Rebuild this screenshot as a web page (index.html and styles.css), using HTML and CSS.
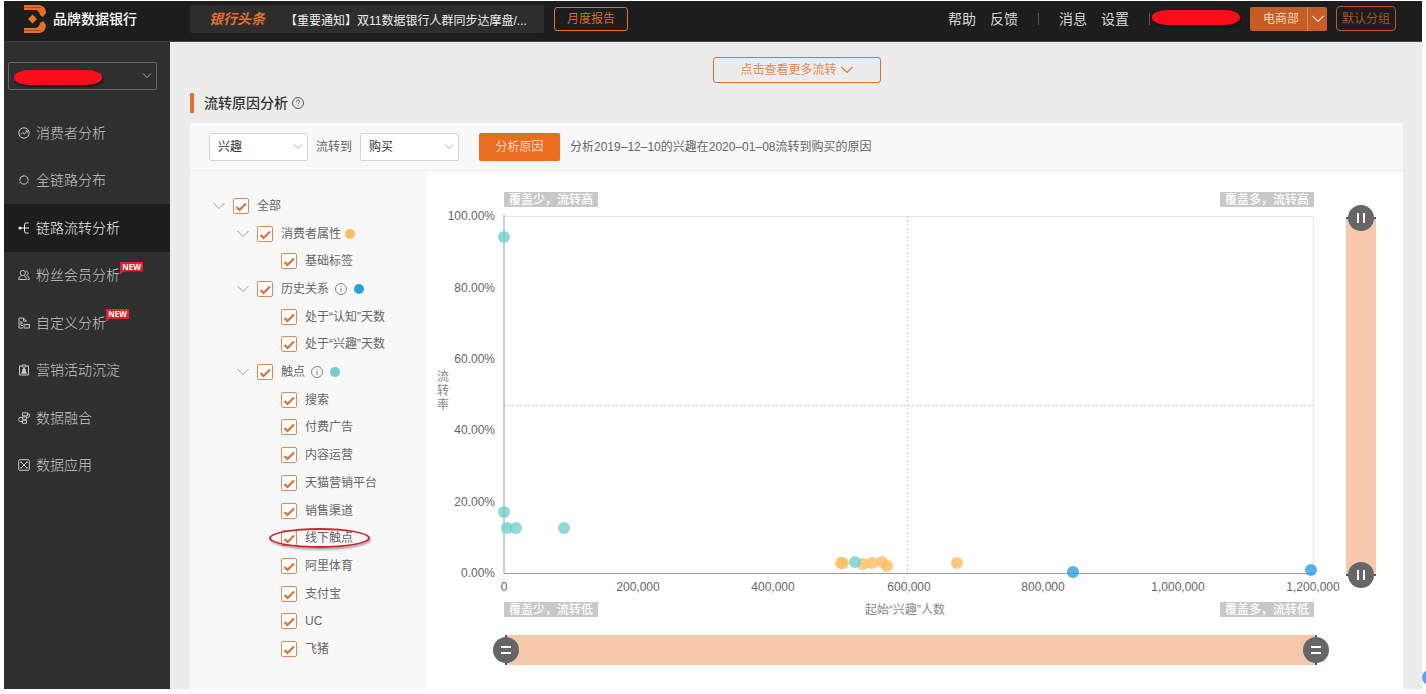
FILE: index.html
```html
<!DOCTYPE html>
<html lang="zh-CN">
<head>
  <meta charset="UTF-8">
  <title>品牌数据银行</title>
  <link rel="stylesheet" href="styles.css">
</head>
<body>
  <header class="topbar">
    <div class="brand">
      <svg class="brand-logo" width="22" height="28" viewBox="0 0 22 28">
        <path d="M0 0h15q7 1 7 8l-3 4-3-2q-1-5-5-5H0zM0 28h15q7-1 7-8l-3-4-3 2q-1 5-5 5H0z" fill="#e36f2a"/>
        <path d="M0 2.500h17M0 25.500h17" stroke="#a3562a"/>
        <path d="M8.500 9.500l4.500 4.500-4.500 4.500L4 14z" fill="#f0752b"/>
      </svg>
      <span>品牌数据银行</span>
    </div>
    <div class="ticker">
      <strong>银行头条</strong>
      <a href="#">【重要通知】双11数据银行人群同步达摩盘/...</a>
    </div>
    <button class="outline-button report-button">月度报告</button>
    <nav class="top-links">
      <a href="#">帮助</a>
      <a href="#">反馈</a>
      <i class="divider"></i>
      <a href="#">消息</a>
      <a href="#">设置</a>
      <i class="divider"></i>
    </nav>
    <span class="mask user-mask"></span>
    <div class="dept">
      <button class="dept-name">电商部</button>
      <button class="dept-arrow" aria-label="切换部门">
        <svg width="12" height="8" viewBox="0 0 12 8"><path d="M.5 1l5.500 5.500L11.500 1" fill="none" stroke="#f6d5c2" stroke-width="1.200"/></svg>
      </button>
    </div>
    <button class="outline-button group-button">默认分组</button>
  </header>

  <div class="shell">
    <aside class="sidebar">
      <div class="account">
        <select aria-label="品牌"><option></option></select>
        <span class="mask account-mask"></span>
      </div>
      <ul class="menu">
        <li><a href="#">
          <svg class="menu-icon" viewBox="0 0 12 12"><circle cx="6" cy="6" r="5.200"/><path d="M2.800 7.500l2-2 1.700 1.500 2.700-3M7.500 3.800l1.800-.1v1.800"/></svg>
          消费者分析</a></li>
        <li><a href="#">
          <svg class="menu-icon" viewBox="0 0 12 12"><circle cx="6" cy="6" r="4.200" stroke-dasharray="7 1.800" stroke-dashoffset="-3"/><path d="M6 .8v2M1.500 8.800l1.500-.9M10.500 8.800L9 7.900"/></svg>
          全链路分布</a></li>
        <li class="active"><a href="#">
          <svg class="menu-icon" viewBox="0 0 12 12"><circle cx="2" cy="6" r="1.600" fill="currentColor" stroke="none"/><path d="M2 6h9M10.500 1H8.200Q6.500 1 6.500 2.800v6.400Q6.500 11 8.200 11h2.300"/></svg>
          链路流转分析</a></li>
        <li><a href="#">
          <svg class="menu-icon" viewBox="0 0 12 12"><circle cx="4.800" cy="4" r="2.600"/><path d="M.8 10.500c0-2.500 1.500-3.500 2.700-3.900M.8 10.500h7.500c0-2.300-1-3.300-2.300-3.900M7.800 2c2.800.2 2.800 3.600.8 4.500 1.500.7 2.600 1.800 2.600 4H9.500"/></svg>
          粉丝会员分析<em class="new-tag">NEW</em></a></li>
        <li><a href="#">
          <svg class="menu-icon" viewBox="0 0 12 12"><path d="M5 11H1V1h4.500l2.500 2.500V5M5.500 1v3H8M3 4v4.500h2M3 6h2M6 11V7l2 1.300 1-1.500 1 1.500 1.400-1.300v4z"/></svg>
          自定义分析<em class="new-tag">NEW</em></a></li>
        <li><a href="#">
          <svg class="menu-icon" viewBox="0 0 12 12"><path d="M4 2H1.500v9h9V2H8M4 1h4v2H4z"/><path d="M6 4l1.500 2L7 7l1.500 2.200h-5L5 7l-.5-1z" fill="currentColor"/></svg>
          营销活动沉淀</a></li>
        <li><a href="#">
          <svg class="menu-icon" viewBox="0 0 12 12"><path d="M4.500.8h5v3h-5zM4.500 4.800h4v2.500h-4zM4.500 8.300h4v3h-4zM9.500 2h1.800v2.800l-2 1M4 5.500H2Q.7 5.700.7 7.500T2 9.500h2"/></svg>
          数据融合</a></li>
        <li><a href="#">
          <svg class="menu-icon" viewBox="0 0 12 12"><rect x=".7" y=".7" width="10.600" height="10.600" rx="1"/><path d="M3 3l6 6M9 3L3 9"/><path d="M2.500 2.500h1.500v1.500H2.500zM8 2.500h1.500v1.500H8zM2.500 8h1.500v1.500H2.500zM8 8h1.500v1.500H8z" fill="currentColor" stroke="none"/></svg>
          数据应用</a></li>
      </ul>
    </aside>

    <main class="content">
      <button class="outline-button more-button">点击查看更多流转
        <svg width="12" height="8" viewBox="0 0 12 8"><path d="M.5 1L6 6.500 11.500 1" fill="none" stroke="#dd7a3e" stroke-width="1.200"/></svg>
      </button>
      <h1 class="section-title">流转原因分析
        <svg width="12" height="12" viewBox="0 0 12 12" fill="none" stroke="#555"><circle cx="6" cy="6" r="5.500"/><path d="M4.300 4.800c0-2.300 3.400-2.200 3.400-.2C7.700 5.800 6 5.700 6 7.200M6 8.300v1"/></svg>
      </h1>

      <section class="card">
        <form class="filters">
          <select aria-label="起始状态"><option>兴趣</option></select>
          <label for="target">流转到</label>
          <select id="target"><option>购买</option></select>
          <button type="button" class="analyze-button">分析原因</button>
          <span>分析2019–12–10的兴趣在2020–01–08流转到购买的原因</span>
        </form>

        <div class="panels">
          <ul class="tree">
            <li class="level-1"><button class="toggle" aria-label="收起"></button><label><input type="checkbox" checked>全部</label></li>
            <li class="level-2"><button class="toggle" aria-label="收起"></button><label><input type="checkbox" checked>消费者属性</label><i class="dot orange"></i></li>
            <li class="level-3"><label><input type="checkbox" checked>基础标签</label></li>
            <li class="level-2"><button class="toggle" aria-label="收起"></button><label><input type="checkbox" checked>历史关系</label><svg class="info" viewBox="0 0 12 12"><circle cx="6" cy="6" r="5.500"/><path d="M6 3v1M6 5v4"/></svg><i class="dot blue"></i></li>
            <li class="level-3"><label><input type="checkbox" checked>处于“认知”天数</label></li>
            <li class="level-3"><label><input type="checkbox" checked>处于“兴趣”天数</label></li>
            <li class="level-2"><button class="toggle" aria-label="收起"></button><label><input type="checkbox" checked>触点</label><svg class="info" viewBox="0 0 12 12"><circle cx="6" cy="6" r="5.500"/><path d="M6 3v1M6 5v4"/></svg><i class="dot teal"></i></li>
            <li class="level-3"><label><input type="checkbox" checked>搜索</label></li>
            <li class="level-3"><label><input type="checkbox" checked>付费广告</label></li>
            <li class="level-3"><label><input type="checkbox" checked>内容运营</label></li>
            <li class="level-3"><label><input type="checkbox" checked>天猫营销平台</label></li>
            <li class="level-3"><label><input type="checkbox" checked>销售渠道</label></li>
            <li class="level-3 circled"><label><input type="checkbox" checked>线下触点</label></li>
            <li class="level-3"><label><input type="checkbox" checked>阿里体育</label></li>
            <li class="level-3"><label><input type="checkbox" checked>支付宝</label></li>
            <li class="level-3"><label><input type="checkbox" checked>UC</label></li>
            <li class="level-3"><label><input type="checkbox" checked>飞猪</label></li>
          </ul>

          <div class="chart">
            <svg class="plot" viewBox="0 0 920 452">
              <!-- frame and quadrant lines -->
              <path class="frame" d="M78 45.500H887.500V402"/>
              <path class="quadrant" d="M481.500 45V402M78 234.500H887"/>
              <path class="axis" d="M78 44V402.500H888"/>

              <g class="corner">
                <rect x="78" y="21" width="94" height="15"/><text x="125" y="33">覆盖少，流转高</text>
                <rect x="794" y="21" width="94" height="15"/><text x="841" y="33">覆盖多，流转高</text>
                <rect x="78" y="431" width="94" height="15"/><text x="125" y="443">覆盖少，流转低</text>
                <rect x="794" y="431" width="94" height="15"/><text x="841" y="443">覆盖多，流转低</text>
              </g>

              <g class="y-labels">
                <text x="69" y="49">100.00%</text>
                <text x="69" y="121">80.00%</text>
                <text x="69" y="192">60.00%</text>
                <text x="69" y="263">40.00%</text>
                <text x="69" y="335">20.00%</text>
                <text x="69" y="406">0.00%</text>
              </g>
              <g class="x-labels">
                <text x="78" y="420">0</text>
                <text x="212" y="420">200,000</text>
                <text x="347" y="420">400,000</text>
                <text x="483" y="420">600,000</text>
                <text x="617" y="420">800,000</text>
                <text x="752" y="420">1,000,000</text>
                <text x="887" y="420">1,200,000</text>
              </g>
              <text class="axis-title" x="479" y="443">起始“兴趣”人数</text>
              <text class="axis-title" x="17" y="210"><tspan x="17">流</tspan><tspan x="17" dy="14">转</tspan><tspan x="17" dy="14">率</tspan></text>

              <g class="points-orange">
                <circle cx="415" cy="392" r="6"/><circle cx="417" cy="392" r="6"/>
                <circle cx="437" cy="393" r="6"/><circle cx="446" cy="392" r="6"/>
                <circle cx="456" cy="391" r="6"/><circle cx="461" cy="395" r="6"/>
                <circle cx="531" cy="392" r="6"/>
              </g>
              <g class="points-teal">
                <circle cx="78" cy="66" r="6"/><circle cx="78" cy="341" r="6"/>
                <circle cx="81" cy="357" r="6"/><circle cx="90" cy="357" r="6"/>
                <circle cx="138" cy="357" r="6"/><circle cx="429" cy="391" r="6"/>
              </g>
              <g class="points-blue">
                <circle cx="647" cy="401" r="6"/><circle cx="885" cy="399" r="6"/>
              </g>
            </svg>
            <div class="range range-y">
              <input type="range" aria-label="流转率上限" value="0">
              <input type="range" aria-label="流转率下限" value="100">
            </div>
            <div class="range range-x">
              <input type="range" aria-label="人数下限" value="0">
              <input type="range" aria-label="人数上限" value="100">
            </div>
          </div>
        </div>
      </section>
    </main>
  </div>
  <button class="helper" aria-label="客服"></button>
</body>
</html>
```
FILE: styles.css
```css
*, *::after {
  box-sizing: border-box;
}
body {
  margin: 0;
  padding: 1px 4px 5px;
  min-height: 100vh;
  display: flex;
  flex-direction: column;
  background: #fff;
  color: #666;
  font: 12px/18px "Liberation Sans", "Noto Sans CJK SC", sans-serif;
}
a {
  color: inherit;
  text-decoration: none;
}
ul {
  list-style: none;
  margin: 0;
  padding: 0;
}
button, select, input {
  margin: 0;
  font: inherit;
  color: inherit;
}
button {
  padding: 0;
  border: 0;
  background: none;
  cursor: pointer;
}
select {
  appearance: none;
  height: 28px;
  padding: 0 8px;
  border: 1px solid #d5d5d5;
  border-radius: 2px;
  background: #fff url("data:image/svg+xml,%3Csvg xmlns='http://www.w3.org/2000/svg' width='10' height='6'%3E%3Cpath d='M1 .5l4 4 4-4' fill='none' stroke='%23aaa'/%3E%3C/svg%3E") no-repeat right 4px center;
}
.outline-button {
  border: 1px solid #e0712f;
  border-radius: 3px;
  color: #d96c2e;
}
.mask {
  background: #fc0d1b;
  border-radius: 16px / 7px;
  box-shadow: 1px 2px 2px rgba(0, 0, 0, 0.5);
}

/* top bar */
.topbar {
  display: flex;
  align-items: flex-start;
  height: 41px;
  padding: 4px 26px 0 20px;
  background: #1d1d1d;
  border-bottom: 1px solid #444;
  color: #d8d8d8;
}
.brand {
  display: flex;
  align-items: center;
  gap: 7px;
  width: 166px;
  font-size: 14px;
  font-weight: 500;
  color: #fff;
}
.ticker {
  display: flex;
  align-items: center;
  gap: 20px;
  width: 354px;
  height: 28px;
  padding-left: 19px;
  border-radius: 2px;
  background: #2d2d2d;
  white-space: nowrap;
  overflow: hidden;
}
.ticker a {
  padding-top: 4px;
  color: #eee;
}
.ticker strong {
  font-size: 14px;
  font-style: italic;
  color: #e0702e;
}
.report-button {
  width: 74px;
  height: 24px;
  margin: 2px 0 0 10px;
}
.top-links {
  display: flex;
  align-items: center;
  gap: 14px;
  height: 28px;
  margin-left: auto;
  font-size: 14px;
}
.divider {
  width: 1px;
  height: 12px;
  margin: 0 6px;
  background: #555;
}
.divider:last-child {
  margin-right: 0;
}
.user-mask {
  width: 88px;
  height: 15px;
  margin: 5px 10px 0 2px;
}
.dept {
  display: flex;
  width: 77px;
  height: 24px;
  margin: 2px 9px 0 0;
  border-radius: 2px;
  background: #c65d22;
  color: #f6d5c2;
}
.dept-name {
  flex: 1;
  padding-left: 5px;
}
.dept-arrow {
  width: 20px;
  border-left: 1px solid #d98a5e;
}
.group-button {
  width: 60px;
  height: 25px;
  margin-top: 1px;
  border-color: #b75c2b;
  border-radius: 4px;
  color: #a4542a;
}

.shell {
  flex: 1;
  display: flex;
}

/* sidebar */
.sidebar {
  flex: none;
  width: 166px;
  padding-top: 20px;
  background: #2f2f2f;
  color: #c8c8c8;
}
.account {
  position: relative;
  margin: 0 13px 19px 4px;
}
.account select {
  display: block;
  width: 100%;
  border-color: #666;
  background-color: transparent;
}
.account-mask {
  position: absolute;
  left: 6px;
  top: 8px;
  width: 88px;
  height: 15px;
}
.menu {
  display: grid;
  grid-auto-rows: 1fr;
  height: 380px;
}
.menu a {
  display: flex;
  align-items: center;
  gap: 6px;
  height: 100%;
  padding-left: 14px;
  font-size: 14px;
  font-weight: 300;
}
.menu .active {
  background: #1d1d1d;
  color: #eee;
}
.menu-icon {
  width: 12px;
  height: 12px;
  fill: none;
  stroke: currentColor;
}
.new-tag {
  align-self: flex-start;
  width: 23px;
  height: 13px;
  margin: 10px 0 0 -6px;
  background: #e0222b;
  clip-path: polygon(0 0, 100% 0, 100% 10px, 4px 10px, 0 13px);
  color: #fff;
  font: bold 8px/10px "Open Sans", sans-serif;
  text-align: center;
}

/* content */
.content {
  flex: 1;
  min-width: 0;
  display: flex;
  flex-direction: column;
  padding: 15px 19px 0 20px;
  background: #ececec;
}
.more-button {
  display: flex;
  align-items: center;
  justify-content: center;
  gap: 4px;
  align-self: center;
  width: 168px;
  height: 26px;
  color: #e08a55;
}
.section-title {
  display: flex;
  align-items: center;
  gap: 4px;
  height: 20px;
  margin: 10px 0;
  padding-left: 10px;
  border-left: 4px solid #e36f2a;
  color: #333;
  font-size: 14px;
  font-weight: 500;
}
.card {
  flex: 1;
  display: flex;
  flex-direction: column;
  background: #fff;
}
.filters {
  display: flex;
  align-items: center;
  height: 48px;
  padding: 0 19px;
  border-bottom: 1px solid #ececec;
  background: #f8f8f8;
}
.filters select {
  width: 99px;
  color: #333;
}
.filters label {
  margin: 0 8px;
}
.analyze-button {
  width: 81px;
  height: 28px;
  margin: 0 10px 0 20px;
  border-radius: 2px;
  background: #eb6d20;
  color: #fbdcc8;
}
.panels {
  flex: 1;
  display: flex;
}

/* filter tree */
.tree {
  flex: none;
  display: grid;
  grid-template-rows: repeat(17, 1fr);
  width: 236px;
  height: 518px;
  padding: 21px 0 26px;
  background: #f8f8f8;
}
.tree li {
  position: relative;
  display: flex;
  align-items: center;
}
.tree label {
  display: flex;
  align-items: center;
  gap: 8px;
}
.level-1 {
  padding-left: 23px;
}
.level-2 {
  padding-left: 47px;
}
.level-3 {
  padding-left: 91px;
}
.toggle {
  width: 12px;
  height: 8px;
  margin-right: 8px;
  background: url("data:image/svg+xml,%3Csvg xmlns='http://www.w3.org/2000/svg' width='12' height='8'%3E%3Cpath d='M.5 1l5.500 5.500L11.500 1' fill='none' stroke='%23999'/%3E%3C/svg%3E");
}
.tree input {
  appearance: none;
  width: 16px;
  height: 16px;
  border: 1px solid #e08a58;
  border-radius: 2px;
  background: #fff;
}
.tree input:checked {
  background: #fff url("data:image/svg+xml,%3Csvg xmlns='http://www.w3.org/2000/svg' width='14' height='14'%3E%3Cpath d='M2.500 8l3 3L12 4.500' fill='none' stroke='%23dd6b29' stroke-width='2'/%3E%3C/svg%3E") center;
}
.info {
  width: 12px;
  height: 12px;
  margin: 0 3px 0 6px;
  fill: none;
  stroke: #888;
}
.dot {
  width: 10px;
  height: 10px;
  margin-left: 4px;
  border-radius: 50%;
}
.dot.orange {
  background: #fcbd63;
}
.dot.blue {
  background: #28a2dd;
}
.dot.teal {
  background: #71d0cb;
}
.circled::after {
  content: "";
  position: absolute;
  left: 79px;
  top: 4px;
  width: 101px;
  height: 20px;
  border: 2px solid #d5202b;
  border-radius: 50%;
  box-shadow: 1px 2px 2px rgba(0, 0, 0, 0.3);
}

/* chart */
.chart {
  flex: 1;
  min-width: 0;
  display: grid;
  grid-template-columns: 1fr 30px;
  align-content: start;
  row-gap: 12px;
  padding: 0 27px 24px 0;
}
.plot {
  display: block;
  width: 100%;
  font-size: 12px;
  fill: #666;
}
.frame, .quadrant, .axis {
  fill: none;
  stroke: #e6e6e6;
}
.quadrant {
  stroke: #ccc;
  stroke-dasharray: 2 2;
}
.axis {
  stroke: #999;
}
.corner rect {
  fill: #c8c8c8;
}
.corner text {
  fill: #fff;
  font-weight: 500;
  text-anchor: middle;
}
.y-labels {
  text-anchor: end;
}
.x-labels, .axis-title {
  text-anchor: middle;
}
.axis-title {
  fill: #888;
}
.points-orange {
  fill: #fcbd63;
  fill-opacity: 0.8;
}
.points-teal {
  fill: #71d0cb;
  fill-opacity: 0.8;
}
.points-blue {
  fill: #28a2dd;
  fill-opacity: 0.8;
}

/* two-thumb ranges, a short dark tick marks each end of the bar */
.range {
  display: grid;
}
.range input {
  grid-area: 1 / 1;
  appearance: none;
  width: 100%;
  height: 100%;
  background: none;
  pointer-events: none;
}
.range input::-webkit-slider-thumb {
  appearance: none;
  width: 26px;
  height: 26px;
  border-radius: 50%;
  background: linear-gradient(#fff, #fff) 8px 9px / 10px 2px no-repeat, linear-gradient(#fff, #fff) 8px 15px / 10px 2px no-repeat, #666;
  pointer-events: auto;
}
.range-x {
  height: 30px;
  margin: 0 17px 0 67px;
  background:
    linear-gradient(#555, #555) left 12px top / 2px 100% no-repeat,
    linear-gradient(#555, #555) right 12px top / 2px 100% no-repeat,
    linear-gradient(#f5c8ac, #f5c8ac) center / calc(100% - 26px) 100% no-repeat;
}
.range-y {
  height: 383px;
  margin-top: 34px;
  background:
    linear-gradient(#555, #555) left top 12px / 100% 2px no-repeat,
    linear-gradient(#555, #555) left bottom 12px / 100% 2px no-repeat,
    linear-gradient(#f5c8ac, #f5c8ac) center / 100% calc(100% - 26px) no-repeat;
}
.range-y input {
  writing-mode: vertical-lr;
}
.range-y input::-webkit-slider-thumb {
  background: linear-gradient(#fff, #fff) 9px 8px / 2px 10px no-repeat, linear-gradient(#fff, #fff) 15px 8px / 2px 10px no-repeat, #666;
}

.helper {
  position: fixed;
  right: -10px;
  bottom: 9px;
  width: 14px;
  height: 15px;
  border-radius: 50%;
  background: #4fa8f7;
}
```
